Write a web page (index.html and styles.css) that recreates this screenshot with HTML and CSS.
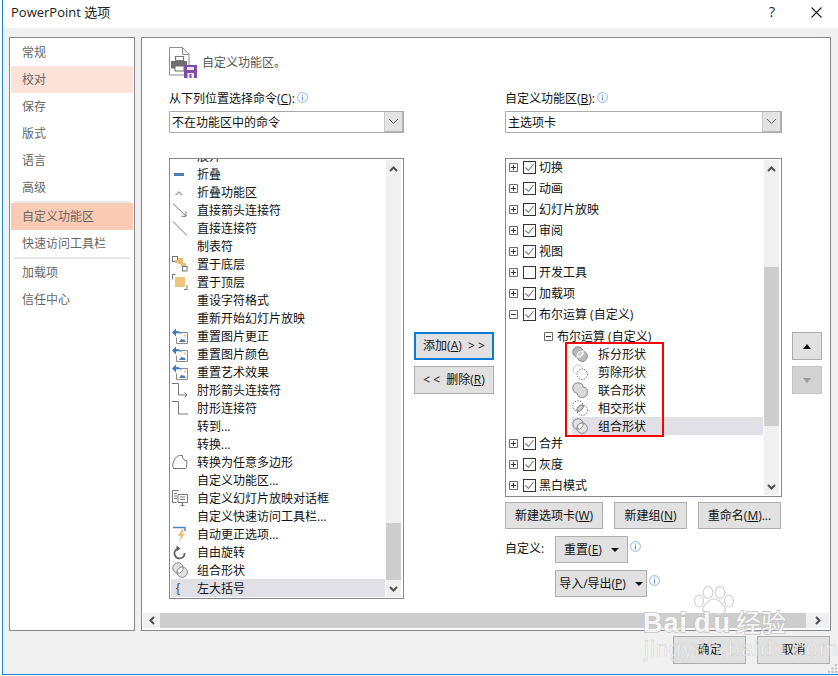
FILE: index.html
```html
<!DOCTYPE html>
<html lang="zh-CN">
<head>
<meta charset="utf-8">
<title>PowerPoint 选项</title>
<link rel="stylesheet" href="styles.css">
</head>
<body>
<svg class="defs" width="0" height="0" aria-hidden="true">
  <symbol id="info" viewBox="0 0 11 11"><circle cx="5.5" cy="5.5" r="4.9" fill="#fff" stroke="#8fb4e0"/><path d="M5 2.5h1v1H5zM5 4.5h1v4H5z" fill="#5c90d2"/></symbol>
  <symbol id="chev-down" viewBox="0 0 11 7"><path d="M1 1l4.5 4.5L10 1" fill="none" stroke="#606060" stroke-width="1"/></symbol>
  <symbol id="s-up" viewBox="0 0 9 6"><path d="M1 5l3.500-3.500L8 5" fill="none" stroke="#505050" stroke-width="2"/></symbol>
  <symbol id="s-down" viewBox="0 0 9 6"><path d="M1 1l3.500 3.500L8 1" fill="none" stroke="#505050" stroke-width="2"/></symbol>
  <symbol id="s-left" viewBox="0 0 6 9"><path d="M5 1L1.500 4.500 5 8" fill="none" stroke="#505050" stroke-width="2"/></symbol>
  <symbol id="s-right" viewBox="0 0 6 9"><path d="M1 1l3.500 3.500L1 8" fill="none" stroke="#505050" stroke-width="2"/></symbol>
  <symbol id="tree-plus" viewBox="0 0 9 9"><path d="M.5.5h8v8h-8z" fill="#fff" stroke="#6d6d6d"/><path d="M2 4.500h5M4.500 2v5" stroke="#333"/></symbol>
  <symbol id="tree-minus" viewBox="0 0 9 9"><path d="M.5.500h8v8h-8z" fill="#fff" stroke="#6d6d6d"/><path d="M2 4.500h5" stroke="#333"/></symbol>
  <symbol id="tick" viewBox="0 0 13 13"><path d="M2.500 6.500l3 3 5-6.500" fill="none" stroke="#7a7a7a" stroke-width="1.100"/></symbol>

  <symbol id="i-minus" viewBox="0 0 16 16"><rect x="2" y="7" width="10" height="3" fill="#4f7db3"/></symbol>
  <symbol id="i-collapse" viewBox="0 0 16 16"><path d="M3 11l4-4 4 4H9L7 9l-2 2z" fill="#a3a3a3"/></symbol>
  <symbol id="i-arrowline" viewBox="0 0 16 16"><path d="M1 1.500l13 12.500M14 9.500v4.800H9.500" fill="none" stroke="#777"/></symbol>
  <symbol id="i-line" viewBox="0 0 16 16"><path d="M1 1.500l14 14" fill="none" stroke="#777"/></symbol>
  <symbol id="i-back" viewBox="0 0 16 16"><rect x=".5" y=".5" width="5" height="5" fill="#fff" stroke="#777"/><rect x="10.500" y="10.500" width="4.500" height="4.500" fill="#fff" stroke="#777"/><path d="M6 2h5v5h3v3H9V8H6V7H3V4h3z" fill="#e9bb73"/></symbol>
  <symbol id="i-front" viewBox="0 0 16 16"><path d="M3.500.5H.5v5M12 15.500h3V11" fill="none" stroke="#777"/><rect x="3" y="3" width="10" height="10" fill="#edc67e"/></symbol>
  <symbol id="i-reset" viewBox="0 0 16 16"><path d="M8.500 4.500h7v11H4.500V9.500" fill="#fff" stroke="#8a8a8a"/><path d="M7 14l2.500-3.500 1.500 1.500 1-1 2 3z" fill="#4f7db3"/><rect x="12" y="6.500" width="2" height="2" fill="#edc67e"/><path d="M0 4.500L4 .5v2.500c3 0 5 1 6 3.500-1.500-1-3.500-1.500-6-1v3z" fill="#3f79bd"/></symbol>
  <symbol id="i-elbowarrow" viewBox="0 0 16 16"><path d="M0 1.500h6.500v11.500H15M12.500 10.500l2.500 2.500-2.500 2.500" fill="none" stroke="#777"/></symbol>
  <symbol id="i-elbow" viewBox="0 0 16 16"><path d="M0 1.500h6.500v12.500H16" fill="none" stroke="#777"/></symbol>
  <symbol id="i-free" viewBox="0 0 16 16"><path d="M1.500 14.500c-1-2-1-5 .5-8C3.500 3.500 5 2 7.500 1.500h3c-.3 3 1.500 5 4.500 5.500l-.5 6.500c0 .7-.5 1-1 1z" fill="#fff" stroke="#777"/></symbol>
  <symbol id="i-show" viewBox="0 0 16 16"><path d="M6.500.5h-6v12h4M2 3.500h3M2 6h3M2 8.500h3" fill="none" stroke="#777"/><path d="M6 4.500h9.500v8H6z" fill="#fff" stroke="#777"/><path d="M8 7h5M8 9.500h5M10.500 12.500v2.500M8.500 15.500h4" fill="none" stroke="#777"/></symbol>
  <symbol id="i-auto" viewBox="0 0 16 16"><path d="M1 1.500h12V5" fill="none" stroke="#4f86c6" stroke-width="1.500"/><path d="M10 3.500L6 10h3l-2.500 6L13 8h-3l2-4.500z" fill="#f0bf6d"/></symbol>
  <symbol id="i-rotate" viewBox="0 0 16 16"><path d="M5 5a5 5 0 1 0 7.500 4" fill="none" stroke="#5d5d5d" stroke-width="1.700"/><path d="M4.500 1.500v6l4-3z" fill="#5d5d5d"/></symbol>
  <symbol id="i-combine" viewBox="0 0 16 16"><circle cx="6" cy="6" r="5.200" fill="#e2e2e2" stroke="#8a8a8a"/><circle cx="10.200" cy="10.200" r="5.200" fill="#e2e2e2" stroke="#8a8a8a"/><path d="M11.120 5.080A5.200 5.200 0 0 1 5.080 11.120 5.200 5.200 0 0 1 11.120 5.080z" fill="#fff" stroke="#8a8a8a"/></symbol>
  <symbol id="i-fragment" viewBox="0 0 16 16"><circle cx="6" cy="6" r="5.200" fill="#b8b8b8" stroke="#8a8a8a"/><circle cx="10.200" cy="10.200" r="5.200" fill="#bdbdbd" stroke="#8a8a8a"/><path d="M11.120 5.080A5.200 5.200 0 0 1 5.080 11.120 5.200 5.200 0 0 1 11.120 5.080z" fill="#cfcfcf" stroke="#fff" stroke-width="1.200"/></symbol>
  <symbol id="i-subtract" viewBox="0 0 16 16"><path d="M10.500 3.500A5 5 0 1 0 3 9.800" fill="none" stroke="#c8c8c8"/><circle cx="10.200" cy="10.200" r="5.200" fill="#fff" stroke="#555" stroke-dasharray="1.200 1.400"/></symbol>
  <symbol id="i-union" viewBox="0 0 16 16"><path d="M5.080 11.120A5.200 5.200 0 1 1 11.120 5.080 5.200 5.200 0 1 1 5.080 11.120z" fill="#dadada" stroke="#808080"/></symbol>
  <symbol id="i-intersect" viewBox="0 0 16 16"><circle cx="6" cy="6" r="5.200" fill="#fff" stroke="#555" stroke-dasharray="1.200 1.400"/><circle cx="10.200" cy="10.200" r="5.200" fill="none" stroke="#555" stroke-dasharray="1.200 1.400"/><path d="M11.120 5.080A5.200 5.200 0 0 1 5.080 11.120 5.200 5.200 0 0 1 11.120 5.080z" fill="#d0d0d0" stroke="#808080"/></symbol>
</svg>

<div class="window">
  <header class="titlebar">
    <span class="title">PowerPoint 选项</span>
    <span class="tb-btn">?</span>
    <span class="tb-btn"><svg width="11" height="11" viewBox="0 0 11 11"><path d="M.5.500l10 10M10.500.500l-10 10" stroke="#222" stroke-width="1.100"/></svg></span>
  </header>

  <div class="main">
    <nav class="nav">
      <div class="nav-item">常规</div>
      <div class="nav-item hover">校对</div>
      <div class="nav-item">保存</div>
      <div class="nav-item">版式</div>
      <div class="nav-item">语言</div>
      <div class="nav-item">高级</div>
      <div class="nav-sep"></div>
      <div class="nav-item active">自定义功能区</div>
      <div class="nav-item">快速访问工具栏</div>
      <div class="nav-sep"></div>
      <div class="nav-item">加载项</div>
      <div class="nav-item">信任中心</div>
    </nav>

    <section class="panel">
      <div class="content">
        <div class="heading">
          <svg class="head-icon" width="28" height="31" viewBox="0 0 28 31">
            <path d="M.5 .5h13l6.500 7V28H.5z" fill="#fff" stroke="#8c8c8c"/>
            <path d="M13.500 .5v7h6.500" fill="none" stroke="#8c8c8c"/>
            <path d="M6.500 9.500h8v4h-8z" fill="#fff" stroke="#777" stroke-width="1.200"/>
            <path d="M2 14h16v7.500H2z" fill="#6e6e6e"/>
            <path d="M6 19h9v5H6z" fill="#fff" stroke="#6e6e6e"/>
            <rect x="15" y="18" width="13" height="13" fill="#7d4fa5"/>
            <rect x="18" y="20" width="7" height="3" fill="#efe9f5"/>
            <rect x="18.500" y="26" width="6.500" height="5" fill="#efe9f5"/>
            <rect x="20.500" y="27" width="2" height="4" fill="#7d4fa5"/>
          </svg>
          <span class="head-text">自定义功能区。</span>
        </div>

        <div class="columns">
          <div class="col col-left">
            <div class="label">从下列位置选择命令(<u>C</u>):<svg class="info"><use href="#info"/></svg></div>
            <div class="combo"><span class="combo-text">不在功能区中的命令</span><span class="combo-btn"><svg width="11" height="7"><use href="#chev-down"/></svg></span></div>
            <div class="list list-left">
              <div class="list-body">
                <div class="rows rows-left">
                  <div class="row"><span class="slot"></span>展开</div>
                  <div class="row"><span class="slot"><svg class="ic"><use href="#i-minus"/></svg></span>折叠</div>
                  <div class="row"><span class="slot"><svg class="ic"><use href="#i-collapse"/></svg></span>折叠功能区</div>
                  <div class="row"><span class="slot"><svg class="ic"><use href="#i-arrowline"/></svg></span>直接箭头连接符</div>
                  <div class="row"><span class="slot"><svg class="ic"><use href="#i-line"/></svg></span>直接连接符</div>
                  <div class="row"><span class="slot"></span>制表符</div>
                  <div class="row"><span class="slot"><svg class="ic"><use href="#i-back"/></svg></span>置于底层</div>
                  <div class="row"><span class="slot"><svg class="ic"><use href="#i-front"/></svg></span>置于顶层</div>
                  <div class="row"><span class="slot"></span>重设字符格式</div>
                  <div class="row"><span class="slot"></span>重新开始幻灯片放映</div>
                  <div class="row"><span class="slot"><svg class="ic"><use href="#i-reset"/></svg></span>重置图片更正</div>
                  <div class="row"><span class="slot"><svg class="ic"><use href="#i-reset"/></svg></span>重置图片颜色</div>
                  <div class="row"><span class="slot"><svg class="ic"><use href="#i-reset"/></svg></span>重置艺术效果</div>
                  <div class="row"><span class="slot"><svg class="ic"><use href="#i-elbowarrow"/></svg></span>肘形箭头连接符</div>
                  <div class="row"><span class="slot"><svg class="ic"><use href="#i-elbow"/></svg></span>肘形连接符</div>
                  <div class="row"><span class="slot"></span>转到...</div>
                  <div class="row"><span class="slot"></span>转换...</div>
                  <div class="row"><span class="slot"><svg class="ic"><use href="#i-free"/></svg></span>转换为任意多边形</div>
                  <div class="row"><span class="slot"></span>自定义功能区...</div>
                  <div class="row"><span class="slot"><svg class="ic"><use href="#i-show"/></svg></span>自定义幻灯片放映对话框</div>
                  <div class="row"><span class="slot"></span>自定义快速访问工具栏...</div>
                  <div class="row"><span class="slot"><svg class="ic"><use href="#i-auto"/></svg></span>自动更正选项...</div>
                  <div class="row"><span class="slot"><svg class="ic"><use href="#i-rotate"/></svg></span>自由旋转</div>
                  <div class="row"><span class="slot"><svg class="ic"><use href="#i-combine"/></svg></span>组合形状</div>
                  <div class="row selected"><span class="slot brace">{</span>左大括号</div>
                </div>
              </div>
              <div class="vscroll">
                <span class="arrow"><svg width="9" height="6"><use href="#s-up"/></svg></span>
                <div class="track"><div class="thumb thumb-left"></div></div>
                <span class="arrow"><svg width="9" height="6"><use href="#s-down"/></svg></span>
              </div>
            </div>
          </div>

          <div class="col-mid">
            <button class="btn btn-add">添加(<u>A</u>)  &gt; &gt;</button>
            <button class="btn btn-del">&lt; &lt;  删除(<u>R</u>)</button>
          </div>

          <div class="col col-right">
            <div class="label">自定义功能区(<u>B</u>):<svg class="info"><use href="#info"/></svg></div>
            <div class="combo"><span class="combo-text">主选项卡</span><span class="combo-btn"><svg width="11" height="7"><use href="#chev-down"/></svg></span></div>
            <div class="list list-right">
              <div class="list-body">
                <div class="rows rows-right">
                  <div class="t-row"><svg class="tb"><use href="#tree-plus"/></svg><span class="cb"><svg width="13" height="13"><use href="#tick"/></svg></span>切换</div>
                  <div class="t-row"><svg class="tb"><use href="#tree-plus"/></svg><span class="cb"><svg width="13" height="13"><use href="#tick"/></svg></span>动画</div>
                  <div class="t-row"><svg class="tb"><use href="#tree-plus"/></svg><span class="cb"><svg width="13" height="13"><use href="#tick"/></svg></span>幻灯片放映</div>
                  <div class="t-row"><svg class="tb"><use href="#tree-plus"/></svg><span class="cb"><svg width="13" height="13"><use href="#tick"/></svg></span>审阅</div>
                  <div class="t-row"><svg class="tb"><use href="#tree-plus"/></svg><span class="cb"><svg width="13" height="13"><use href="#tick"/></svg></span>视图</div>
                  <div class="t-row"><svg class="tb"><use href="#tree-plus"/></svg><span class="cb"></span>开发工具</div>
                  <div class="t-row"><svg class="tb"><use href="#tree-plus"/></svg><span class="cb"><svg width="13" height="13"><use href="#tick"/></svg></span>加载项</div>
                  <div class="t-row"><svg class="tb"><use href="#tree-minus"/></svg><span class="cb"><svg width="13" height="13"><use href="#tick"/></svg></span>布尔运算 (自定义)</div>
                  <div class="t-child"><svg class="tb"><use href="#tree-minus"/></svg>布尔运算 (自定义)</div>
                  <div class="leaves">
                    <div class="leaf"><span class="slot"><svg class="ic"><use href="#i-fragment"/></svg></span>拆分形状</div>
                    <div class="leaf"><span class="slot"><svg class="ic"><use href="#i-subtract"/></svg></span>剪除形状</div>
                    <div class="leaf"><span class="slot"><svg class="ic"><use href="#i-union"/></svg></span>联合形状</div>
                    <div class="leaf"><span class="slot"><svg class="ic"><use href="#i-intersect"/></svg></span>相交形状</div>
                    <div class="leaf selected"><span class="slot"><svg class="ic"><use href="#i-combine"/></svg></span>组合形状</div>
                    <div class="redbox"></div>
                  </div>
                  <div class="t-group">
                    <div class="t-row"><svg class="tb"><use href="#tree-plus"/></svg><span class="cb"><svg width="13" height="13"><use href="#tick"/></svg></span>合并</div>
                    <div class="t-row"><svg class="tb"><use href="#tree-plus"/></svg><span class="cb"><svg width="13" height="13"><use href="#tick"/></svg></span>灰度</div>
                    <div class="t-row"><svg class="tb"><use href="#tree-plus"/></svg><span class="cb"><svg width="13" height="13"><use href="#tick"/></svg></span>黑白模式</div>
                  </div>
                </div>
              </div>
              <div class="vscroll">
                <span class="arrow"><svg width="9" height="6"><use href="#s-up"/></svg></span>
                <div class="track"><div class="thumb thumb-right"></div></div>
                <span class="arrow"><svg width="9" height="6"><use href="#s-down"/></svg></span>
              </div>
            </div>
            <div class="btn-row">
              <button class="btn b-newtab">新建选项卡(<u>W</u>)</button>
              <button class="btn b-newgroup">新建组(<u>N</u>)</button>
              <button class="btn b-rename">重命名(<u>M</u>)...</button>
            </div>
            <div class="cust-row">
              <span class="cust-label">自定义:</span>
              <button class="btn b-reset">重置(<u>E</u>)<i class="caret"></i></button>
              <svg class="info info-side"><use href="#info"/></svg>
            </div>
            <div class="cust-row cust-row2">
              <button class="btn b-import">导入/导出(<u>P</u>)<i class="caret"></i></button>
              <svg class="info info-side"><use href="#info"/></svg>
            </div>
          </div>

          <div class="col-move">
            <button class="btn mv"><i class="tri-up"></i></button>
            <button class="btn mv mv-off"><i class="tri-down"></i></button>
          </div>
        </div>
      </div>

      <div class="hscroll">
        <span class="h-arrow h-left"><svg width="6" height="9"><use href="#s-left"/></svg></span>
        <div class="h-thumb"></div>
        <span class="h-arrow h-right"><svg width="6" height="9"><use href="#s-right"/></svg></span>
      </div>
    </section>
  </div>

  <footer class="footer">
    <button class="btn b-foot">确定</button>
    <button class="btn b-foot">取消</button>
    <svg class="grip" width="10" height="10" viewBox="0 0 10 10"><path d="M7 0h2v2H7zM3.500 3.500h2v2h-2zM7 3.500h2v2H7zM0 7h2v2H0zM3.500 7h2v2h-2zM7 7h2v2H7z" fill="#bdbdbd"/></svg>
  </footer>

  <div class="watermark">
    <svg class="paw" width="42" height="30" viewBox="0 0 42 30">
      <g fill="rgba(255,255,255,.7)" stroke="#d2d2d2" stroke-width="1.200">
        <ellipse cx="6" cy="15" rx="4.500" ry="6"/>
        <ellipse cx="15" cy="6.500" rx="4.800" ry="6"/>
        <ellipse cx="27" cy="6.500" rx="4.800" ry="6"/>
        <ellipse cx="36" cy="15" rx="4.500" ry="6"/>
        <path d="M21 13c5 0 7 4 10 7 3 4 0 9-5 8-3-.5-7-.5-10 0-5 1-8-4-5-8 3-3 5-7 10-7z"/>
      </g>
    </svg>
    <div class="wm-line1"><span class="wm-bai">Bai</span><span class="wm-du">du</span><span class="wm-cn">经验</span></div>
    <div class="wm-line2">jingyan.baidu.com</div>
  </div>
</div>
</body>
</html>
```

FILE: styles.css
```css
* { box-sizing: border-box; }
html, body { margin: 0; padding: 0; background: #fff; }
body {
  width: 838px;
  height: 676px;
  overflow: hidden;
  font: 12px/18px "Open Sans", "Noto Sans CJK SC", sans-serif;
  color: #111;
}
.defs { position: absolute; }
u { text-decoration: underline; text-underline-offset: 1px; }

.window {
  position: relative;
  margin-left: 2px;
  width: 836px;
  height: 675px;
  border-left: 1px solid #1a86d9;
  border-bottom: 1px solid #1a86d9;
  background: #f0f0f0;
  display: flex;
  flex-direction: column;
}

.titlebar {
  height: 28px;
  background: #fff;
  display: flex;
  align-items: center;
  padding: 0 0 4px 8px;
  flex: none;
}
.title { flex: 1; font-size: 13px; color: #222; }
.tb-btn {
  width: 44px;
  display: flex;
  justify-content: center;
  align-items: center;
  font-size: 14px;
  color: #222;
}

.main {
  flex: none;
  display: flex;
  gap: 6px;
  padding: 9px 0 0 6px;
}

.nav {
  width: 126px;
  height: 594px;
  background: #fff;
  border: 1px solid #85888e;
  padding: 1px 1px 0;
  color: #666;
  flex: none;
}
.nav-item { height: 27px; line-height: 27px; padding-left: 11px; }
.nav-item.hover { background: #fde2d9; }
.nav-item.active { background: #fccbb4; }
.nav-sep { height: 2px; margin: 0 3px; background: #e8e8e8; }

.panel {
  width: 690px;
  height: 594px;
  background: #fff;
  border: 1px solid #85888e;
  display: flex;
  flex-direction: column;
  flex: none;
}
.content { flex: 1; min-height: 0; padding: 9px 0 0 27px; overflow: hidden; }

.heading { display: flex; align-items: center; height: 31px; gap: 5px; color: #555; }
.head-icon { flex: none; }

.columns { display: flex; align-items: flex-start; margin-top: 11px; }
.col { flex: none; display: flex; flex-direction: column; }
.col-left { width: 235px; margin-right: 10px; }
.col-right { width: 277px; margin-right: 10px; }
.col-mid { width: 80px; margin-right: 11px; flex: none; padding-top: 243px; display: flex; flex-direction: column; gap: 6px; }
.col-move { width: 30px; flex: none; padding-top: 243px; display: flex; flex-direction: column; gap: 6px; }

.label { height: 18px; display: flex; align-items: center; padding-top: 2px; white-space: pre; }
.info { width: 11px; height: 11px; flex: none; margin-left: 2px; margin-top: -3px; }

.combo {
  height: 22px;
  margin-top: 4px;
  border: 1px solid #ababab;
  display: flex;
  background: #fff;
}
.combo-text { flex: 1; padding-left: 2px; line-height: 21px; }
.combo-btn {
  width: 19px;
  background: #e3e3e3;
  border-left: 1px solid #c8c8c8;
  border-right: 1px solid #b4b4b4;
  border-bottom: 1px solid #b4b4b4;
  display: flex;
  align-items: center;
  justify-content: center;
}

.list {
  margin-top: 25px;
  border: 1px solid #85888e;
  background: #fff;
  display: flex;
  overflow: hidden;
}
.list-left { height: 441px; }
.list-right { height: 339px; }
.list-body { flex: 1; min-width: 0; overflow: hidden; }
.rows { display: flex; flex-direction: column; }
.rows-left { margin-top: -12px; }
.rows-right { margin-top: -2px; }

.row { height: 18px; flex: none; display: flex; align-items: center; margin: 0 1px; padding-top: 2px; white-space: pre; }
.slot { width: 26px; flex: none; display: flex; align-items: center; padding-left: 1px; margin-top: -2px; }
.ic { width: 16px; height: 16px; display: block; }
.brace { padding-left: 5px; font-family: "Liberation Sans", sans-serif; color: #444; }
.selected { background: #e0e0e6; }

.vscroll {
  width: 15px;
  margin: 1px 2px 1px 0;
  flex: none;
  background: #f0f0f0;
  display: flex;
  flex-direction: column;
}
.arrow { height: 17px; flex: none; display: flex; align-items: center; justify-content: center; }
.track { flex: 1; min-height: 0; }
.thumb { background: #cdcdcd; }
.thumb-left { margin-top: 346px; height: 57px; }
.thumb-right { margin-top: 90px; height: 159px; }

.t-row { height: 21px; display: flex; align-items: center; padding-left: 3px; white-space: pre; flex: none; }
.tb { width: 9px; height: 9px; flex: none; display: block; }
.cb {
  width: 13px;
  height: 13px;
  flex: none;
  margin: 0 3px 0 5px;
  border: 1px solid #333;
  background: #fff;
  display: block;
}
.cb svg { display: block; margin: -1px; }
.t-child { height: 18px; margin-top: 2px; padding: 1px 0 0 38px; gap: 4px; display: flex; align-items: center; white-space: pre; flex: none; }
.leaves { position: relative; margin-left: 66px; flex: none; }
.leaf { height: 18px; margin-right: 1px; padding-top: 2px; display: flex; align-items: center; white-space: pre; }
.leaf .slot { padding-left: 0; }
.t-group { margin-top: -2px; }
.redbox {
  position: absolute;
  left: -7px;
  top: -3px;
  width: 99px;
  height: 95px;
  border: 2px solid #f00;
  pointer-events: none;
}

.btn {
  font: inherit;
  color: #111;
  background: #e1e1e1;
  border: 1px solid #adadad;
  padding: 0;
  margin: 0;
  display: flex;
  align-items: center;
  justify-content: center;
  white-space: pre;
}
.btn-add, .btn-del { height: 28px; width: 80px; }
.btn-add { border: 2px solid #0a7bd6; }
.mv { width: 30px; height: 28px; }
.mv-off { background: #d2d2d2; border-color: #c4c4c4; }
.tri-up { width: 0; height: 0; border: 4px solid transparent; border-top: 0; border-bottom: 5px solid #111; }
.tri-down { width: 0; height: 0; border: 4px solid transparent; border-bottom: 0; border-top: 5px solid #9a9a9a; }

.btn-row { display: flex; gap: 11px; margin-top: 5px; }
.btn-row .btn { height: 27px; }
.b-newtab { width: 98px; }
.b-newgroup { width: 73px; }
.b-rename { width: 83px; }

.cust-row { display: flex; align-items: center; margin-top: 7px; height: 27px; }
.cust-row2 { padding-left: 50px; }
.cust-label { width: 50px; flex: none; margin-top: -1px; }
.cust-row .btn { height: 27px; }
.b-reset { width: 73px; }
.b-import { width: 92px; }
.caret { width: 0; height: 0; margin-left: 9px; border: 4px solid transparent; border-bottom: 0; border-top: 4px solid #111; }
.info-side { margin-left: 2px; margin-top: -7px; }

.hscroll { height: 15px; margin: 0 1px 2px 1px; background: #f0f0f0; display: flex; flex: none; }
.h-arrow { display: flex; align-items: center; justify-content: center; flex: none; }
.h-left { width: 17px; }
.h-right { width: 23px; }
.h-thumb { flex: 1; background: #cdcdcd; }

.footer {
  position: relative;
  flex: 1;
  display: flex;
  justify-content: flex-end;
  gap: 11px;
  padding: 5px 8px 0 0;
}
.b-foot { width: 73px; height: 28px; }
.grip { position: absolute; right: 0; bottom: 0; }

.watermark {
  position: absolute;
  left: 640px;
  top: 586px;
  width: 185px;
  height: 76px;
  pointer-events: none;
  font-family: "Liberation Sans", "Noto Sans CJK SC", sans-serif;
}
.paw { position: absolute; left: 50px; top: 0; }
.wm-line1 {
  position: absolute;
  left: 0;
  top: 18px;
  display: flex;
  align-items: baseline;
  color: rgba(255,255,255,.85);
  -webkit-text-stroke: 1.500px #c6c6c6;
  paint-order: stroke fill;
  font-weight: bold;
  line-height: 34px;
}
.wm-bai { font-size: 27px; letter-spacing: 1px; }
.wm-du { font-size: 27px; margin-left: 6px; letter-spacing: 3px; }
.wm-cn { font-size: 25px; margin-left: 3px; font-family: "Noto Sans CJK SC", sans-serif; font-weight: 400; }
.wm-line2 {
  position: absolute;
  left: 1px;
  top: 50px;
  font-size: 22px;
  line-height: 26px;
  letter-spacing: 1px;
  color: rgba(255,255,255,.5);
  -webkit-text-stroke: .6px rgba(190,190,190,.6);
  white-space: pre;
}
```
